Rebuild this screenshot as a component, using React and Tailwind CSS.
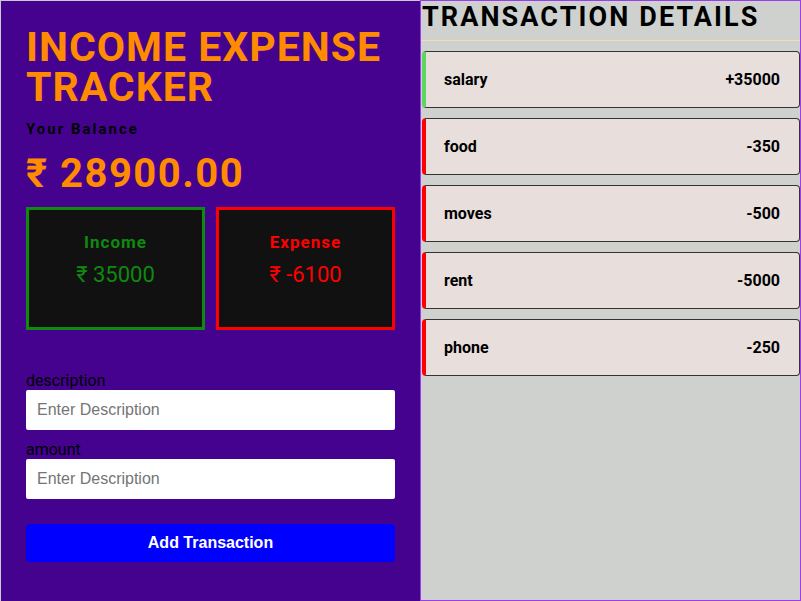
import React from "react";

const transactions = [
  { text: "salary", amount: "+35000", income: true },
  { text: "food", amount: "-350", income: false },
  { text: "moves", amount: "-500", income: false },
  { text: "rent", amount: "-5000", income: false },
  { text: "phone", amount: "-250", income: false },
];

const App = () => {
  return (
    <div className="flex w-[801px] h-[601px] overflow-hidden font-['Roboto',sans-serif]">
      {/* left side */}
      <div className="w-[420px] h-full bg-[#45028f] border-t border-l border-[#c9c9d0] pl-[25px] pr-[25px] pt-[26px] flex flex-col">
        <h1 className="text-[41px] leading-[40px] font-bold tracking-[1px] text-[#ff8c00]">INCOME EXPENSE TRACKER</h1>
        <h4 className="mt-[13px] text-[15px] leading-[18px] font-bold tracking-[2px] text-black">Your Balance</h4>
        <h2 className="mt-[14px] text-[40px] leading-[44px] font-bold tracking-[1.5px] text-[#ff8c00]">₹ 28900.00</h2>
        <div className="mt-[11px] flex gap-[11px]">
          <div className="w-[179px] h-[123px] bg-[#111111] border-[3px] border-[#0e8a0e] flex flex-col items-center pt-[20px]">
            <p className="text-[17px] leading-[24px] font-bold tracking-[1px] text-[#0e8a0e]">Income</p>
            <p className="mt-[6px] text-[22px] leading-[30px] text-[#0e8a0e]">₹ 35000</p>
          </div>
          <div className="w-[179px] h-[123px] bg-[#111111] border-[3px] border-[#ff0000] flex flex-col items-center pt-[20px]">
            <p className="text-[17px] leading-[24px] font-bold tracking-[1px] text-[#ff0000]">Expense</p>
            <p className="mt-[6px] text-[22px] leading-[30px] text-[#ff0000]">₹ -6100</p>
          </div>
        </div>
        <form className="mt-[42px] flex flex-col" onSubmit={(e) => e.preventDefault()}>
          <label className="text-[16px] leading-[18px] text-black">description</label>
          <input
            type="text"
            placeholder="Enter Description"
            className="h-[40px] w-full bg-white rounded-[2px] px-[11px] text-[16px] font-['Liberation_Sans',Arial,sans-serif] placeholder:text-[#757575] outline-none"
          />
          <label className="mt-[11px] text-[16px] leading-[18px] text-black">amount</label>
          <input
            type="text"
            placeholder="Enter Description"
            className="h-[40px] w-full bg-white rounded-[2px] px-[11px] text-[16px] font-['Liberation_Sans',Arial,sans-serif] placeholder:text-[#757575] outline-none"
          />
          <button className="mt-[25px] h-[38px] w-full bg-[#0000ff] rounded-[4px] text-white text-[16px] font-bold font-['Liberation_Sans',Arial,sans-serif]">
            Add Transaction
          </button>
        </form>
      </div>
      {/* right side */}
      <div className="flex-1 h-full bg-[#cfd1ce] border border-[#9b3cf0] flex flex-col">
        <h2 className="pl-px h-[40px] text-[27px] leading-[32px] font-bold tracking-[2.1px] text-black border-b border-[#f3dcae]">
          TRANSACTION DETAILS
        </h2>
        <div className="mt-[10px] flex flex-col gap-[10px]">
          {transactions.map((t, i) => (
            <div
              key={i}
              className={`h-[57px] ml-px bg-[#e8dfdd] border border-[#333333] rounded-[4px] border-l-[4px] flex items-center justify-between pl-[18px] pr-[19px] text-[16px] font-bold text-black ${t.income ? "border-l-[#5cd65c]" : "border-l-[#ff0000]"}`}
            >
              <span>{t.text}</span>
              <span>{t.amount}</span>
            </div>
          ))}
        </div>
      </div>
    </div>
  );
};

export default App;
